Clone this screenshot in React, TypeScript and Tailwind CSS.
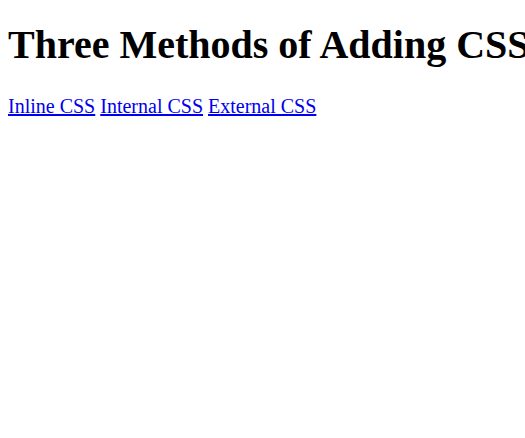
import React from 'react';

const links = ['Inline CSS', 'Internal CSS', 'External CSS'];

const App: React.FC = () => {
  return (
    <div className="min-h-screen bg-white px-2 flex flex-col text-black font-['Liberation_Serif','Times_New_Roman',serif] text-[20px] whitespace-nowrap overflow-hidden">
      <h1 className="mt-[15px] text-[40px] font-bold leading-normal">Three Methods of Adding CSS</h1>
      <p className="mt-[16px] leading-normal">
        {links.map((label, i) => (
          <React.Fragment key={label}>
            {i > 0 && ' '}
            <a href="#" className="text-[#0000ee] underline">{label}</a>
          </React.Fragment>
        ))}
      </p>
    </div>
  );
};

export default App;
